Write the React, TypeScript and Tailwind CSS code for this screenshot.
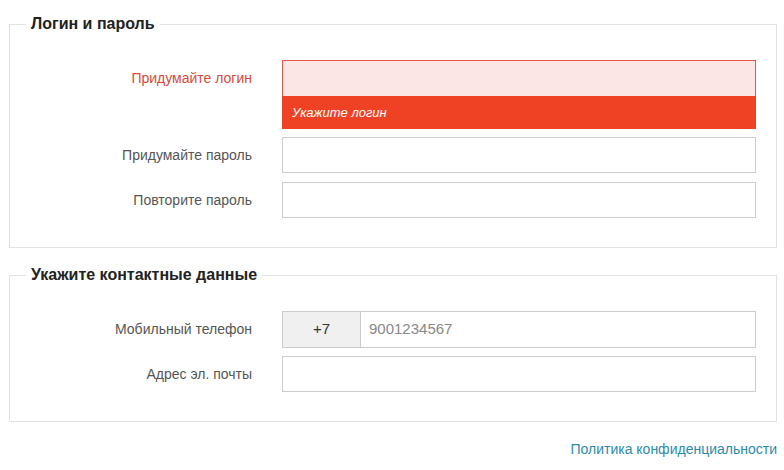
import React from "react";

const font = { fontFamily: '"Liberation Sans", Arial, sans-serif' };

type RowProps = {
    label: string;
    error?: string;
    children?: React.ReactNode;
};

const Row = ({ label, error, children }: RowProps) => (
    <div className="flex items-start">
        <label
            className={`w-[242px] shrink-0 h-[36px] flex items-center justify-end text-[14px] ${
                error ? "text-[#d9493a]" : "text-[#555]"
            }`}
        >
            {label}
        </label>
        <div className="ml-[30px] w-[474px]">
            {children ?? (
                <input
                    type="text"
                    className="block w-full h-[36px] border border-[#cccccc] bg-white outline-none px-2 text-[14px]"
                />
            )}
            {error && (
                <div className="h-[33px] bg-[#ef4123] text-white italic text-[13px] flex items-center px-[10px]">
                    {error}
                </div>
            )}
        </div>
    </div>
);

const Section = ({ title, children }: { title: string; children: React.ReactNode }) => (
    <fieldset className="border border-[#e2e2e2] pb-[29px]">
        <legend className="ml-[16px] px-[5px] text-[16px] font-bold text-[#222] leading-[20px]">
            {title}
        </legend>
        <div className="flex flex-col gap-[8px] pt-[26px]">{children}</div>
    </fieldset>
);

export default function App() {
    return (
        <div className="w-[784px] h-[470px] bg-white pl-[9px] pt-[14px]" style={font}>
            <div className="w-[768px]">
                <Section title="Логин и пароль">
                    <Row label="Придумайте логин" error="Укажите логин">
                        <input
                            type="text"
                            className="block w-full h-[36px] border border-b-0 border-[#e05a45] bg-[#fce5e5] outline-none px-2"
                        />
                    </Row>
                    <div className="flex flex-col gap-[9px]">
                        <Row label="Придумайте пароль" />
                        <Row label="Повторите пароль" />
                    </div>
                </Section>

                <div className="h-[17px]" />

                <Section title="Укажите контактные данные">
                    <Row label="Мобильный телефон">
                        <div className="flex h-[37px] border border-[#cccccc]">
                            <div className="w-[78px] bg-[#f0f0f0] border-r border-[#cccccc] flex items-center justify-center text-[15px] text-[#333]">
                                +7
                            </div>
                            <div className="flex-1 flex items-center px-[8px] text-[15px] text-[#888]">
                                9001234567
                            </div>
                        </div>
                    </Row>
                    <Row label="Адрес эл. почты" />
                </Section>

                <div className="flex justify-end mt-[17px]">
                    <a href="#" className="text-[14px] text-[#2b8bab]">
                        Политика конфиденциальности
                    </a>
                </div>
            </div>
        </div>
    );
}
